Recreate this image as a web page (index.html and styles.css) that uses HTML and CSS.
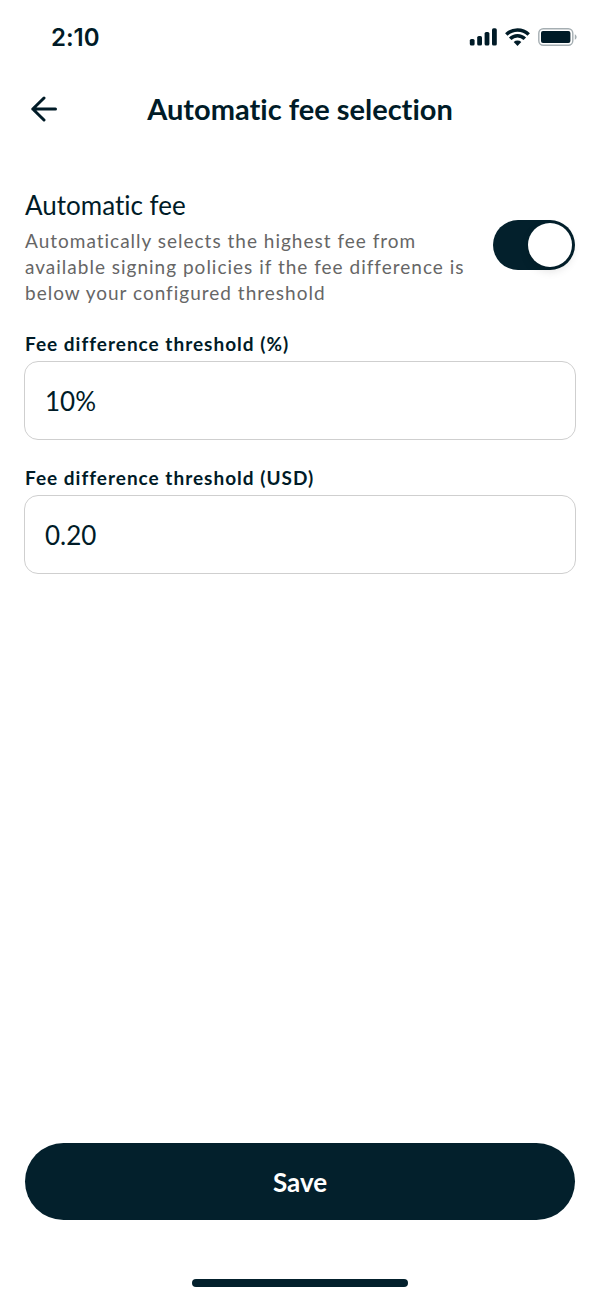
FILE: index.html
```
<!DOCTYPE html>
<html lang="en">
<head>
    <meta charset="UTF-8">
    <meta name="viewport" content="width=device-width, initial-scale=1">
    <title>Automatic fee selection</title>
    <link rel="stylesheet" href="styles.css">
</head>
<body>
    <div class="status-bar">
        <span class="time">2:10</span>
        <div class="status-icons">
            <svg width="28" height="18" viewBox="0 0 28 18" fill="currentColor" aria-hidden="true">
                <rect x="0.8" y="11" width="4.8" height="6.5" rx="1.6"/>
                <rect x="8.2" y="8" width="4.8" height="9.5" rx="1.6"/>
                <rect x="15.6" y="4" width="4.8" height="13.5" rx="1.6"/>
                <rect x="23" y="0.3" width="4.8" height="17.2" rx="1.6"/>
            </svg>
            <svg width="25" height="18" viewBox="0 0 25 18" aria-hidden="true">
                <g fill="none" stroke="currentColor" stroke-width="3.5">
                    <path d="M1.3 6.4A16.2 16.2 0 0 1 23.7 6.4"/>
                    <path d="M5.2 10.7A10.3 10.3 0 0 1 19.8 10.7"/>
                </g>
                <path fill="currentColor" d="M8.7 14.1A5.6 5.6 0 0 1 16.3 14.1L12.5 17.9Z"/>
            </svg>
            <svg width="39" height="18" viewBox="0 0 39 18" aria-hidden="true">
                <rect x="0.8" y="0.8" width="34" height="16.4" rx="4.5" fill="none" stroke="#a5aeb2" stroke-width="1.4"/>
                <rect x="3" y="3" width="29.4" height="12" rx="2" fill="currentColor"/>
                <path d="M36.8 6.2C39.2 7.1 39.2 10.9 36.8 11.8Z" fill="#a5aeb2"/>
            </svg>
        </div>
    </div>

    <header class="header">
        <button type="button" class="back" aria-label="Back">
            <svg width="26" height="26" viewBox="0 0 26 26" fill="none" stroke="currentColor" stroke-width="3" stroke-linecap="round" stroke-linejoin="round">
                <path d="M24.5 13H1.8M13 2L1.8 13L13 24"/>
            </svg>
        </button>
        <h1>Automatic fee selection</h1>
    </header>

    <form class="settings">
        <div class="toggle-row">
            <div class="toggle-text">
                <label for="autoFee">Automatic fee</label>
                <p id="autoFeeHint">Automatically selects the highest fee from available signing policies if the fee difference is below your configured threshold</p>
            </div>
            <input type="checkbox" role="switch" class="switch" id="autoFee" aria-describedby="autoFeeHint" checked>
        </div>
        <div class="field">
            <label for="percent">Fee difference threshold (%)</label>
            <input type="text" id="percent" name="percent" value="10%">
        </div>
        <div class="field">
            <label for="usd">Fee difference threshold (USD)</label>
            <input type="text" id="usd" name="usd" value="0.20">
        </div>
        <button type="submit" class="save">Save</button>
    </form>

    <div class="home-indicator"></div>
</body>
</html>
```
FILE: styles.css
```
* { box-sizing: border-box; }
body {
    margin: 0;
    min-height: 100vh;
    display: flex;
    flex-direction: column;
    background: #fff;
    color: #001b27;
    font-family: Lato, sans-serif;
    font-variant-ligatures: none;
}
button, input { font-family: inherit; color: inherit; }

.status-bar {
    display: flex;
    align-items: center;
    justify-content: space-between;
    height: 74px;
    padding: 0 23px 0 51px;
}
.time {
    font-family: Inter, sans-serif;
    font-size: 24px;
    font-weight: 600;
}
.status-icons { display: flex; gap: 8px; }
.status-icons svg { display: block; }

.header {
    display: grid;
    grid-template-columns: 40px 1fr 40px;
    align-items: center;
    height: 70px;
    padding: 0 24px;
}
.header h1 {
    margin: 0;
    font-size: 29px;
    line-height: 36px;
    font-weight: 700;
    text-align: center;
}
.back {
    display: flex;
    align-items: center;
    justify-content: center;
    height: 40px;
    padding: 0;
    border: none;
    background: none;
    cursor: pointer;
}

.settings {
    flex: 1;
    display: flex;
    flex-direction: column;
    gap: 26px;
    padding: 45px 24px 0;
}
.toggle-row {
    display: flex;
    align-items: flex-start;
    justify-content: space-between;
    gap: 24px;
    padding: 0 1px;
}
.toggle-text label {
    display: block;
    font-size: 26px;
    line-height: 32px;
}
.toggle-text p {
    margin: 7px 0 0;
    color: #666;
    font-size: 19px;
    line-height: 26px;
    letter-spacing: 1px;
}
.switch {
    appearance: none;
    flex-shrink: 0;
    width: 82px;
    height: 50px;
    margin: 31px 0 0;
    padding: 3px;
    border-radius: 25px;
    background: #c8ced1;
    cursor: pointer;
}
.switch::before {
    content: "";
    display: block;
    width: 44px;
    height: 44px;
    border-radius: 50%;
    background: #fff;
    box-shadow: 0 4px 10px rgba(0,0,0,0.12);
}
.switch:checked { background: #03202c; }
.switch:checked::before { margin-left: auto; }

.field { display: flex; flex-direction: column; gap: 5px; }
.field label {
    padding-left: 1px;
    font-size: 19px;
    line-height: 24px;
    font-weight: 700;
    letter-spacing: 1px;
}
.field input {
    width: 100%;
    height: 79px;
    padding: 0 20px;
    border: 1px solid #cfcfcf;
    border-radius: 14px;
    background: #fff;
    font-size: 26px;
}
.save {
    height: 77px;
    margin: auto 1px 0;
    border: none;
    border-radius: 39px;
    background: #03202c;
    color: #fff;
    font-size: 26px;
    font-weight: 700;
    cursor: pointer;
}
.home-indicator {
    width: 36%;
    height: 8px;
    margin: 59px auto 13px;
    border-radius: 4px;
    background: #03202c;
}
```
